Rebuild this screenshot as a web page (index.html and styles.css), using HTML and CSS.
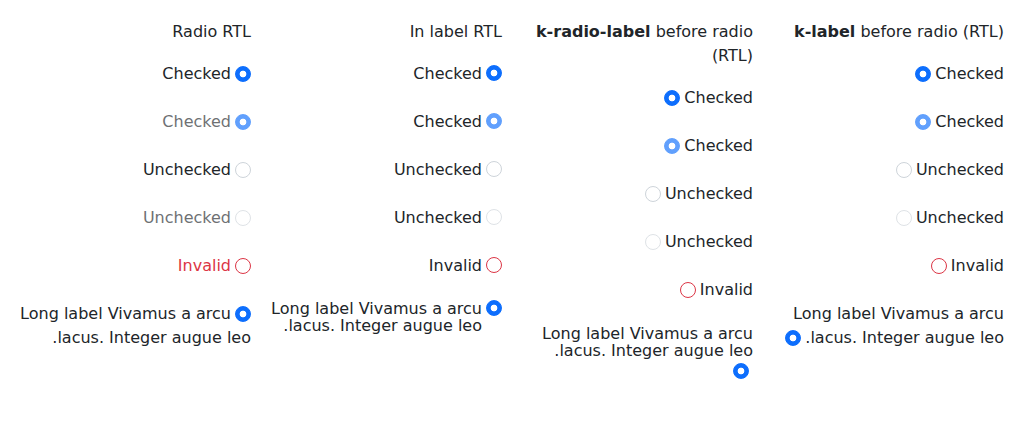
FILE: index.html
```html
<!DOCTYPE html>
<html lang="en">
<head>
<meta charset="utf-8">
<title>Radio RTL</title>
<link rel="stylesheet" href="styles.css">
</head>
<body>
<div class="grid">
  <section class="col" dir="rtl">
    <p class="title">Radio RTL</p>
    <div class="rows">
      <div class="row"><input type="radio" class="k-radio" checked><label class="k-radio-label">Checked</label></div>
      <div class="row"><input type="radio" class="k-radio" checked disabled><label class="k-radio-label">Checked</label></div>
      <div class="row"><input type="radio" class="k-radio"><label class="k-radio-label">Unchecked</label></div>
      <div class="row"><input type="radio" class="k-radio" disabled><label class="k-radio-label">Unchecked</label></div>
      <div class="row"><input type="radio" class="k-radio k-invalid"><label class="k-radio-label">Invalid</label></div>
      <div class="row"><input type="radio" class="k-radio" checked><label class="k-radio-label">Long label Vivamus a arcu lacus. Integer augue leo.</label></div>
    </div>
  </section>

  <section class="col" dir="rtl">
    <p class="title">In label RTL</p>
    <div class="rows">
      <div class="row"><label class="k-radio-label k-flex k-in"><input type="radio" class="k-radio" checked><span>Checked</span></label></div>
      <div class="row"><label class="k-radio-label k-flex k-in"><input type="radio" class="k-radio" checked disabled><span>Checked</span></label></div>
      <div class="row"><label class="k-radio-label k-flex k-in"><input type="radio" class="k-radio"><span>Unchecked</span></label></div>
      <div class="row"><label class="k-radio-label k-flex k-in"><input type="radio" class="k-radio" disabled><span>Unchecked</span></label></div>
      <div class="row"><label class="k-radio-label k-flex k-in"><input type="radio" class="k-radio k-invalid"><span>Invalid</span></label></div>
      <div class="row"><label class="k-radio-label k-flex k-in"><input type="radio" class="k-radio" checked><span>Long label Vivamus a arcu lacus. Integer augue leo.</span></label></div>
    </div>
  </section>

  <section class="col" dir="rtl">
    <p class="title"><strong>k-radio-label</strong> before radio (RTL)</p>
    <div class="rows">
      <div class="row"><label class="k-radio-label k-flex k-before">Checked</label><input type="radio" class="k-radio" checked></div>
      <div class="row"><label class="k-radio-label k-flex k-before">Checked</label><input type="radio" class="k-radio" checked disabled></div>
      <div class="row"><label class="k-radio-label k-flex k-before">Unchecked</label><input type="radio" class="k-radio"></div>
      <div class="row"><label class="k-radio-label k-flex k-before">Unchecked</label><input type="radio" class="k-radio" disabled></div>
      <div class="row"><label class="k-radio-label k-flex k-before">Invalid</label><input type="radio" class="k-radio k-invalid"></div>
      <div class="row"><label class="k-radio-label k-flex k-before">Long label Vivamus a arcu lacus. Integer augue leo.</label><input type="radio" class="k-radio" checked></div>
    </div>
  </section>

  <section class="col" dir="rtl">
    <p class="title"><strong>k-label</strong> before radio (RTL)</p>
    <div class="rows">
      <div class="row"><label class="k-label">Checked</label><input type="radio" class="k-radio" checked></div>
      <div class="row"><label class="k-label">Checked</label><input type="radio" class="k-radio" checked disabled></div>
      <div class="row"><label class="k-label">Unchecked</label><input type="radio" class="k-radio"></div>
      <div class="row"><label class="k-label">Unchecked</label><input type="radio" class="k-radio" disabled></div>
      <div class="row"><label class="k-label">Invalid</label><input type="radio" class="k-radio k-invalid"></div>
      <div class="row"><label class="k-label">Long label Vivamus a arcu lacus. Integer augue leo.</label><input type="radio" class="k-radio" checked></div>
    </div>
  </section>
</div>
</body>
</html>
```

FILE: styles.css
```css
* {
  box-sizing: border-box;
}

body {
  margin: 0;
  font-family: "DejaVu Sans", sans-serif;
  font-size: 16px;
  line-height: 1.5;
  color: #212529;
  background: #ffffff;
}

.grid {
  display: grid;
  grid-template-columns: repeat(4, minmax(0, 1fr));
  column-gap: 19px;
  padding: 20px 20px 20px 19px;
}

.col {
  min-width: 0;
}

.title {
  margin: 0 0 17.5px;
}

.title strong {
  font-weight: 700;
}

.rows {
  display: flex;
  flex-direction: column;
  gap: 24px;
}

.k-radio {
  -webkit-appearance: none;
  appearance: none;
  display: inline-block;
  flex: none;
  margin: 0;
  width: 16px;
  height: 16px;
  border: 1px solid #ced4da;
  border-radius: 50%;
  background: #ffffff;
  vertical-align: middle;
}

.k-radio:checked {
  border-color: #0d6efd;
  background: radial-gradient(circle, #ffffff 0 3px, #0d6efd 3.7px);
}

.k-radio.k-invalid {
  border-color: #dc3545;
}

.k-radio:disabled {
  opacity: 0.65;
}

.k-radio + .k-radio-label {
  margin-inline-start: 4px;
}

.k-radio:disabled + .k-radio-label {
  opacity: 0.65;
}

.k-radio.k-invalid + .k-radio-label {
  color: #dc3545;
}

.k-radio-label.k-flex {
  display: inline-flex;
  align-items: flex-start;
  gap: 4px;
  line-height: 17px;
  vertical-align: middle;
}

.k-radio-label.k-in {
  margin-top: -2px;
}

.k-radio-label.k-before {
  margin-top: -1px;
}

.k-radio-label + .k-radio,
.k-label + .k-radio {
  margin-inline-start: 4px;
}
```
